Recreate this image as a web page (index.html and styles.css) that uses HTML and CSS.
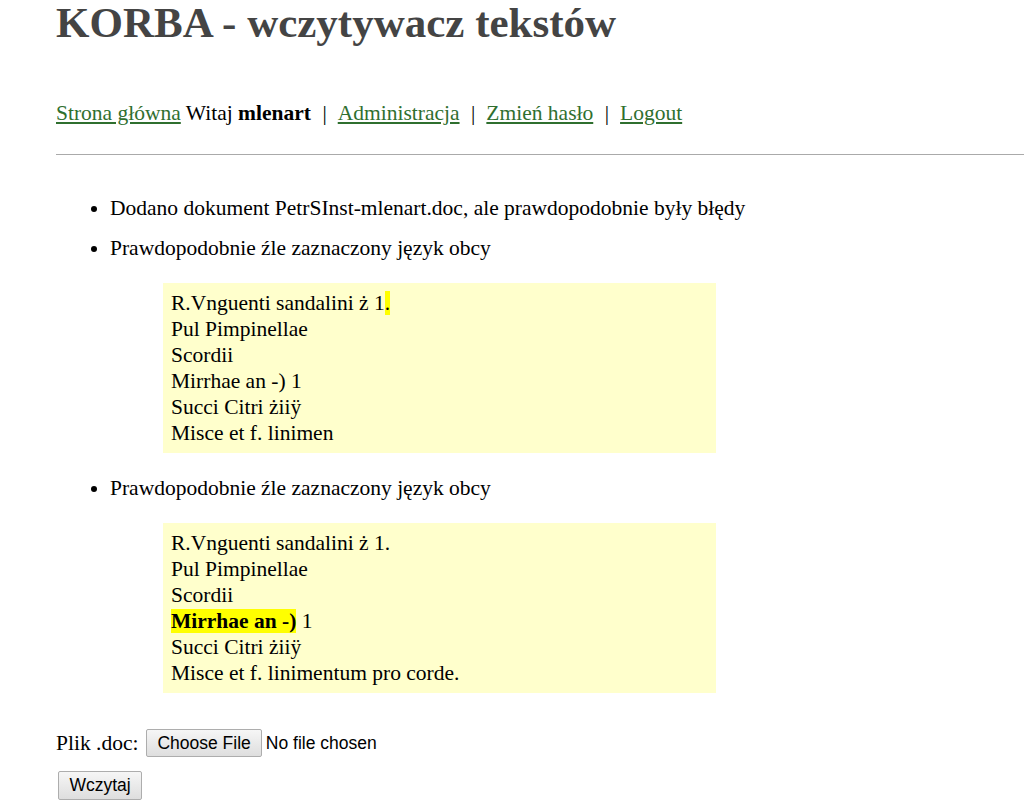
FILE: index.html
```html
<!DOCTYPE html>
<html lang="pl">
<head>
<meta charset="utf-8">
<title>KORBA - wczytywacz tekstów</title>
<link rel="stylesheet" href="styles.css">
</head>
<body>
<h1 class="title">KORBA - wczytywacz tekstów</h1>
<div class="nav"><a href="#">Strona główna</a> Witaj <b>mlenart</b><span class="sep">|</span><a href="#">Administracja</a><span class="sep">|</span><a href="#">Zmień hasło</a><span class="sep">|</span><a href="#">Logout</a></div>
<hr class="rule">
<ul class="messages">
  <li class="msg">Dodano dokument PetrSInst-mlenart.doc, ale prawdopodobnie były błędy</li>
  <li class="msg">Prawdopodobnie źle zaznaczony język obcy
    <div class="excerpt">R.Vnguenti sandalini ż 1<span class="hl">.</span><br>Pul Pimpinellae<br>Scordii<br>Mirrhae an -) 1<br>Succi Citri żiiÿ<br>Misce et f. linimen</div>
  </li>
  <li class="msg">Prawdopodobnie źle zaznaczony język obcy
    <div class="excerpt">R.Vnguenti sandalini ż 1.<br>Pul Pimpinellae<br>Scordii<br><b class="hl">Mirrhae an -)</b> 1<br>Succi Citri żiiÿ<br>Misce et f. linimentum pro corde.</div>
  </li>
</ul>
<form class="upload">
  <div class="file-row"><span class="label">Plik .doc:</span><input class="file" type="file"></div>
  <div><button class="btn" type="button">Wczytaj</button></div>
</form>
</body>
</html>
```

FILE: styles.css
```css
html, body {
  margin: 0;
  padding: 0;
  background: #fff;
}
body {
  padding-left: 56px;
  font-family: "Liberation Serif", "Times New Roman", serif;
  font-size: 21.5px;
  line-height: 23px;
  color: #000;
  overflow: hidden;
}
.title {
  margin: 0;
  font-size: 43px;
  line-height: 46px;
  font-weight: bold;
  color: #444;
}
.nav {
  margin-top: 56px;
  line-height: 23px;
}
.nav a {
  color: #2f6f2f;
  text-decoration: underline;
}
.sep {
  padding: 0 11px 0 11.5px;
  color: #000;
}
.rule {
  margin: 29px 0 0 0;
  border: 0;
  border-top: 1px solid #aaa;
  height: 0;
}
.messages {
  margin: 42px 0 0 0;
  padding-left: 54px;
}
.msg {
  margin: 0 0 17px 0;
}
.excerpt {
  margin: 23px 0 24px 53px;
  width: 537px;
  padding: 7px 8px 7px 8px;
  background: #ffffcc;
  line-height: 26px;
}
.hl {
  background: #ffff00;
}
.upload {
  margin-top: 36px;
  display: flex;
  flex-direction: column;
  gap: 14px;
}
.file-row {
  display: flex;
  align-items: center;
  gap: 8px;
}
.label {
  line-height: 28px;
}
.file {
  font-family: "Liberation Sans", Arial, sans-serif;
  font-size: 17.5px;
  color: #000;
  height: 28px;
}
.file::file-selector-button {
  font-family: "Liberation Sans", Arial, sans-serif;
  font-size: 17.5px;
  height: 28px;
  padding: 0 10px;
  margin-right: 4px;
  border: 1px solid #adadad;
  border-radius: 2px;
  background: linear-gradient(#f6f6f6, #dedede);
  color: #000;
}
.btn {
  margin-left: 2px;
  font-family: "Liberation Sans", Arial, sans-serif;
  font-size: 17.5px;
  height: 29px;
  width: 84px;
  padding: 0;
  border: 1px solid #adadad;
  border-radius: 2px;
  background: linear-gradient(#f6f6f6, #dedede);
  color: #000;
}
```
